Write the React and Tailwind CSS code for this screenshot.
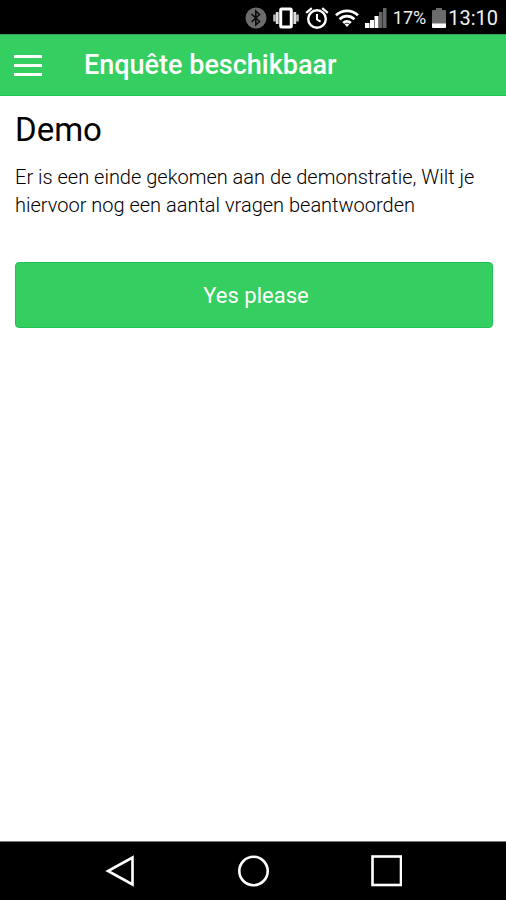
import React from 'react';

const BluetoothIcon = () => (
  <svg width="22" height="22" viewBox="0 0 22 22" fill="none" aria-hidden="true">
    <circle cx="11" cy="11" r="10.5" fill="#6b6b6b" />
    <path d="M6.5 7l8 7.5-3.7 3.5V4l3.7 3.5-8 7.5" stroke="#0c0c0c" strokeWidth="1.6" />
  </svg>
);

const VibrateIcon = () => (
  <svg width="26" height="22" viewBox="0 0 26 22" fill="none" aria-hidden="true">
    <rect x="7.7" y="2" width="10.6" height="18" rx="1" stroke="#fff" strokeWidth="3" />
    <path d="M4.2 5v12M21.8 5v12" stroke="#ddd" strokeWidth="2.8" />
    <path d="M1.5 7.5v7M24.5 7.5v7" stroke="#bbb" strokeWidth="2.6" />
  </svg>
);

const AlarmIcon = () => (
  <svg width="24" height="24" viewBox="0 0 24 24" fill="none" stroke="#fff" aria-hidden="true">
    <circle cx="12" cy="13" r="8.8" strokeWidth="2.4" />
    <path d="M12 8v5.5l3.6 2.2" strokeWidth="2" />
    <path d="M1.2 6.8l5.6-4.6M22.8 6.8l-5.6-4.6" strokeWidth="2.2" />
  </svg>
);

const WifiIcon = () => (
  <svg width="24" height="20" viewBox="0 0 24 20" fill="none" stroke="#fff" strokeWidth="2.8" aria-hidden="true">
    <path d="M1 7.2c6.2-5.8 15.8-5.8 22 0" />
    <path d="M4.6 11.2c4.2-4 10.6-4 14.8 0" />
    <path d="M8.2 15c2.2-2 5.4-2 7.6 0" />
    <path d="M9.6 16.3L12 19l2.4-2.7c-1.4-1.2-3.4-1.2-4.8 0z" fill="#fff" stroke="none" />
  </svg>
);

const SignalIcon = () => (
  <svg width="22" height="20" viewBox="0 0 22 20" aria-hidden="true">
    <path d="M0 15h4.5v5H0zM5 12h4v8H5zM9.5 8h4v12h-4z" fill="#fff" />
    <path d="M14 4h3.5v16H14zM18 0h3.5v20H18z" fill="#666" />
  </svg>
);

const BatteryIcon = () => (
  <svg width="14" height="20" viewBox="0 0 14 20" aria-hidden="true">
    <path d="M4 0h6v2h3a1 1 0 0 1 1 1v13H0V3a1 1 0 0 1 1-1h3z" fill="#6b6b6b" />
    <path d="M0 15.5h14V19a1 1 0 0 1-1 1H1a1 1 0 0 1-1-1z" fill="#fff" />
  </svg>
);

const StatusBar = () => (
  <div className="flex h-[34px] items-center justify-end bg-black pt-0.5 pr-2 text-xl text-[#f0f0f0]">
    <div className="mr-1.5 flex items-center gap-[6px]">
      <BluetoothIcon />
      <VibrateIcon />
      <AlarmIcon />
      <WifiIcon />
      <SignalIcon />
    </div>
    <span className="mr-1.5 text-lg">17%</span>
    <BatteryIcon />
    <span className="ml-0.5">13:10</span>
  </div>
);

const Header = () => (
  <header className="flex h-[62px] items-center border-t border-b border-t-[#3f9f58] border-b-[#1fc255] bg-[#35ce60] px-[14px] text-white">
    <button type="button" aria-label="Menu" className="flex w-7 flex-col gap-[6px]">
      <span className="h-[3px] bg-white" />
      <span className="h-[3px] bg-white" />
      <span className="h-[3px] bg-white" />
    </button>
    <h1 className="ml-[42px] text-[27px] font-medium">Enquête beschikbaar</h1>
  </header>
);

const NavigationBar = () => (
  <nav className="grid h-[59px] grid-cols-3 items-center border-t border-[#777] bg-black px-[53px]">
    <button type="button" aria-label="Back" className="flex justify-center">
      <svg width="32" height="32" viewBox="0 0 32 32" fill="none" stroke="#fff" strokeWidth="2.6">
        <path d="M28.5 2.5v27L4 16z" />
      </svg>
    </button>
    <button type="button" aria-label="Home" className="flex justify-center">
      <svg width="32" height="32" viewBox="0 0 32 32" fill="none" stroke="#fff" strokeWidth="2.6">
        <circle cx="16.5" cy="16" r="14.2" />
      </svg>
    </button>
    <button type="button" aria-label="Recent apps" className="flex justify-center">
      <svg width="32" height="32" viewBox="0 0 32 32" fill="none" stroke="#fff" strokeWidth="2.6">
        <rect x="2.5" y="1.5" width="28.5" height="28.5" />
      </svg>
    </button>
  </nav>
);

const App = () => {
  return (
    <div className="flex min-h-screen flex-col bg-white font-[Roboto,sans-serif]">
      <StatusBar />
      <Header />
      <main className="flex-1 pt-3 pr-[13px] pl-[15px]">
        <h2 className="text-[33px] leading-[44px] text-black">Demo</h2>
        <p className="mt-[11px] text-xl leading-7 font-light text-black">
          Er is een einde gekomen aan de demonstratie, Wilt je hiervoor nog een aantal vragen beantwoorden
        </p>
        <button
          type="button"
          className="mt-[43px] h-[66px] w-full rounded border border-[#1fc255] bg-[#35ce60] pl-1 text-[22px] text-white"
        >
          Yes please
        </button>
      </main>
      <NavigationBar />
    </div>
  );
};

export default App;
